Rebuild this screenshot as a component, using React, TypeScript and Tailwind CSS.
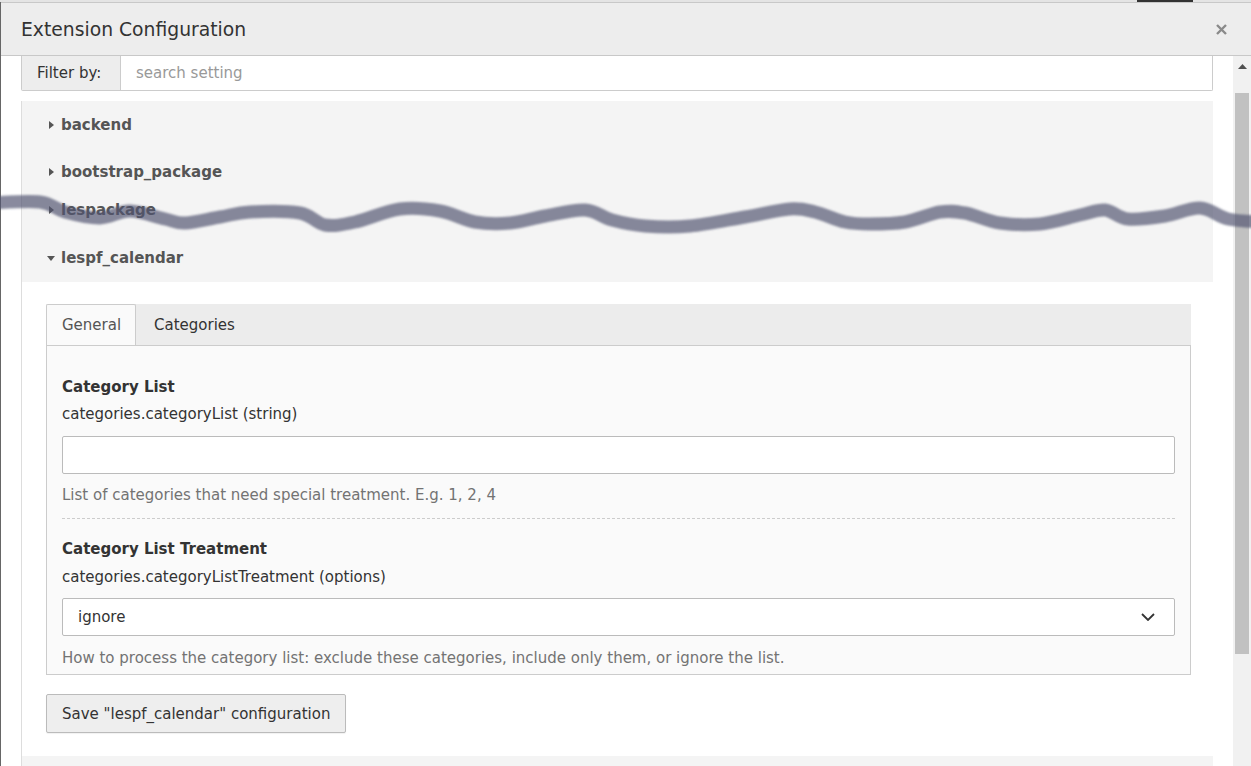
import React from 'react';

const Caret = ({ open }: { open?: boolean }) =>
  open ? (
    <svg width="8" height="5" viewBox="0 0 8 5" className="mr-[6px]">
      <path d="M0 0 H8 L4 5 Z" fill="#555" />
    </svg>
  ) : (
    <svg width="5" height="8" viewBox="0 0 5 8" className="ml-[2px] mr-[7px]">
      <path d="M0 0 L5 4 L0 8 Z" fill="#555" />
    </svg>
  );

const AccordionRow = ({ label, open, className }: { label: string; open?: boolean; className: string }) => (
  <div className={`flex items-center pl-[25px] bg-[#f4f4f4] ${className}`}>
    <Caret open={open} />
    <span className="text-[15px] font-bold text-[#555] leading-[20px]">{label}</span>
  </div>
);

// hand-drawn scribble crossing the lespackage row
const scribble: [number, number][] = [
  [-10, 203], [40, 202], [65, 212], [100, 218], [130, 211], [165, 219], [185, 223], [220, 217],
  [250, 212], [300, 213], [325, 225], [355, 222], [400, 209], [440, 211], [475, 222], [510, 223],
  [545, 216], [585, 210], [612, 220], [645, 226], [690, 226], [745, 217], [790, 209], [815, 212],
  [845, 222], [870, 224], [905, 222], [940, 212], [965, 213], [1000, 223], [1040, 224], [1080, 215],
  [1105, 210], [1128, 219], [1165, 216], [1200, 208], [1228, 219], [1260, 222],
];

// Catmull-Rom through the points so the stroke reads like a marker line
const smoothPath = (pts: [number, number][]) => {
  let d = `M${pts[0][0]},${pts[0][1]}`;
  for (let i = 0; i < pts.length - 1; i++) {
    const p0 = pts[i - 1] || pts[i];
    const p1 = pts[i];
    const p2 = pts[i + 1];
    const p3 = pts[i + 2] || p2;
    const c1x = p1[0] + (p2[0] - p0[0]) / 6;
    const c1y = p1[1] + (p2[1] - p0[1]) / 6;
    const c2x = p2[0] - (p3[0] - p1[0]) / 6;
    const c2y = p2[1] - (p3[1] - p1[1]) / 6;
    d += ` C${c1x.toFixed(1)},${c1y.toFixed(1)} ${c2x.toFixed(1)},${c2y.toFixed(1)} ${p2[0]},${p2[1]}`;
  }
  return d;
};

const Scribble = () => (
  <svg className="absolute inset-0 pointer-events-none" width="1251" height="766" viewBox="0 0 1251 766">
    <defs>
      <filter id="soft" x="-5%" y="-50%" width="110%" height="200%">
        <feGaussianBlur stdDeviation="1.2" />
      </filter>
    </defs>
    <path
      d={smoothPath(scribble)}
      fill="none"
      stroke="#4f5470"
      strokeOpacity="0.68"
      strokeWidth="13"
      strokeLinecap="round"
      strokeLinejoin="round"
      filter="url(#soft)"
    />
  </svg>
);

export default function App() {
  return (
    <div className="relative w-[1251px] h-[766px] overflow-hidden bg-white font-['DejaVu_Sans',sans-serif] text-[#333]">
      {/* page peeking above the modal */}
      <div className="h-[2px] bg-[#e4e4e4] flex">
        <div className="ml-[1137px] w-[56px] bg-[#333]" />
      </div>

      <div className="flex flex-col h-[764px] border-l border-[#666]">
        {/* Header */}
        <div className="h-[54px] shrink-0 bg-[#ededed] border-t border-b border-[#c8c8c8] flex items-center justify-between pl-[20px] pr-[24px]">
          <h1 className="text-[18.75px] text-[#333] leading-none pt-[2px]">Extension Configuration</h1>
          <svg width="11" height="11" viewBox="0 0 11 11">
            <path d="M1 1 L10 10 M10 1 L1 10" stroke="#8a8a8a" strokeWidth="2.4" />
          </svg>
        </div>

        <div className="flex flex-1 min-h-0">
          {/* Scrolled content */}
          <div className="flex-1 pl-[20px] pr-[20px]">
            {/* Filter */}
            <div className="flex h-[35px] border-x border-b border-[#ccc] rounded-b-[2px]">
              <div className="w-[99px] bg-[#ededed] border-r border-[#ccc] flex items-center pl-[15px] text-[15px] text-[#333]">
                Filter by:
              </div>
              <div className="flex-1 flex items-center pl-[15px] text-[15px] text-[#999]">search setting</div>
            </div>

            {/* Accordion */}
            <div className="mt-[10px] border-l border-[#ddd]">
              <AccordionRow label="backend" className="h-[47px]" />
              <AccordionRow label="bootstrap_package" className="h-[47px]" />
              <AccordionRow label="lespackage" className="h-[30px]" />
              <AccordionRow label="lespf_calendar" open className="h-[57px] pt-[9px]" />

              <div className="bg-white pt-[22px] pl-[24px] pr-[22px] pb-[23px]">
                {/* Tabs */}
                <div className="flex h-[41px] bg-[#ececec]">
                  <div className="w-[90px] bg-[#fafafa] border border-b-0 border-[#ccc] rounded-t-[2px] flex items-center pl-[15px] pt-[1px] text-[15px] text-[#555]">
                    General
                  </div>
                  <div className="flex items-center pl-[18px] pt-[1px] text-[15px] text-[#333]">Categories</div>
                </div>
                <div className="bg-[#fafafa] border border-[#ccc] px-[15px] pt-[31px] pb-[6px]">
                  <div className="text-[15px] font-bold leading-[20px]">Category List</div>
                  <div className="mt-[7px] text-[15px] leading-[20px]">categories.categoryList (string)</div>
                  <div className="mt-[12px] h-[38px] bg-white border border-[#bbb] rounded-[2px]" />
                  <div className="mt-[11px] text-[15px] leading-[20px] text-[#737373]">
                    List of categories that need special treatment. E.g. 1, 2, 4
                  </div>
                  <div className="mt-[13px] border-t border-dashed border-[#ccc]" />
                  <div className="mt-[20px] text-[15px] font-bold leading-[20px]">Category List Treatment</div>
                  <div className="mt-[8px] text-[15px] leading-[20px]">categories.categoryListTreatment (options)</div>
                  <div className="mt-[11px] h-[38px] bg-white border border-[#bbb] rounded-[2px] flex items-center justify-between pl-[15px] pr-[19px]">
                    <span className="text-[15px] text-[#333] pt-[1px]">ignore</span>
                    <svg width="14" height="8" viewBox="0 0 14 8">
                      <path d="M1 1 L7 7 L13 1" fill="none" stroke="#333" strokeWidth="1.8" />
                    </svg>
                  </div>
                  <div className="mt-[12px] text-[15px] leading-[20px] text-[#737373]">
                    How to process the category list: exclude these categories, include only them, or ignore the list.
                  </div>
                </div>

                <button className="mt-[19px] h-[39px] px-[15px] pt-[1px] bg-[#eee] border border-[#bbb] rounded-[2px] text-[15px] text-[#333] shadow-[0_1px_1px_rgba(0,0,0,0.06)]">
                  Save "lespf_calendar" configuration
                </button>
              </div>

              <AccordionRow label="" className="h-[30px]" />
            </div>
          </div>

          {/* Scrollbar */}
          <div className="w-[18px] shrink-0 bg-[#f1f1f1] flex flex-col items-center">
            <svg width="9" height="5" viewBox="0 0 9 5" className="mt-[8px]">
              <path d="M0 5 L4.5 0 L9 5 Z" fill="#505050" />
            </svg>
            <div className="mt-[24px] w-[14px] h-[561px] bg-[#c1c1c1]" />
          </div>
        </div>
      </div>

      <Scribble />
    </div>
  );
}
